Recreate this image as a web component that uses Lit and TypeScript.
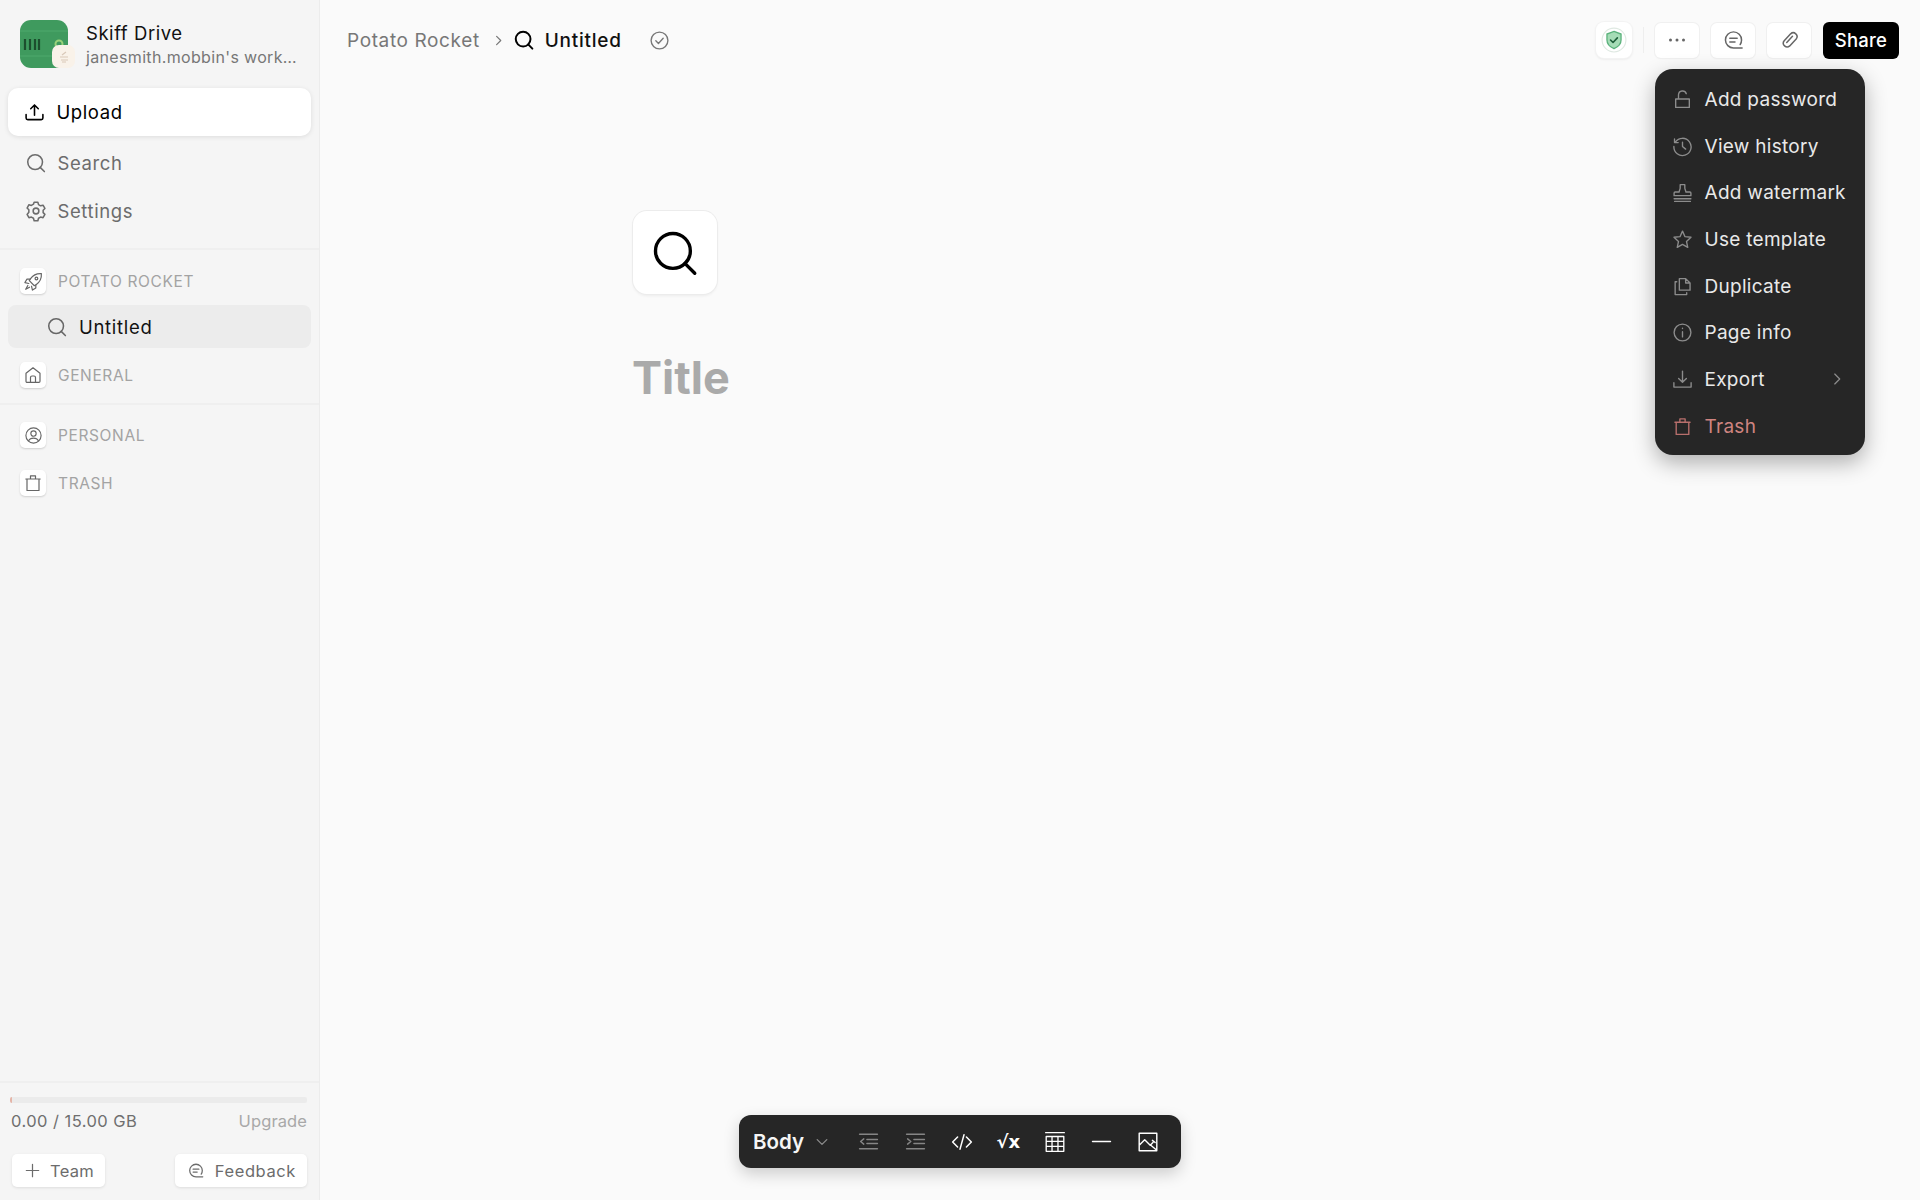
import { LitElement, html, css, svg } from "lit";
import { customElement } from "lit/decorators.js";

const ic = (body: unknown, size = 20, sw = 1.5) => html`<svg class="ic" width=${size} height=${size} viewBox="0 0 20 20" fill="none" stroke="currentColor" stroke-width=${sw} stroke-linecap="round" stroke-linejoin="round">${body}</svg>`;

const I = {
  search: svg`<circle cx="9.2" cy="9.2" r="6.7"/><path d="M13.8 14 L17.6 17.8"/>`,
  upload: svg`<path d="M10 12.5V3M6.4 6.4 10 2.8l3.6 3.6M2 12v3.2c0 .9.7 1.6 1.6 1.6h12.8c.9 0 1.6-.7 1.6-1.6V12"/>`,
  gear: svg`<path d="M8.3 2.2h3.4l.6 2.2 1.9 1.1 2.2-.6 1.7 3-1.6 1.6v2.2l1.6 1.6-1.7 3-2.2-.6-1.9 1.1-.6 2.2H8.3l-.6-2.2-1.9-1.1-2.2.6-1.7-3L3.500 11.300V9.100L1.900 7.500l1.700-3 2.200.6 1.900-1.100z" transform="translate(0 -.2)"/><circle cx="10" cy="10" r="2.600"/>`,
  rocket: svg`<path d="M17.500 2.500c-4.500-.3-8 1.500-10.300 4.800L6 9.200l4.800 4.800 1.900-1.200c3.300-2.300 5.100-5.800 4.800-10.300z" /><circle cx="12.800" cy="7.200" r="1.300"/><path d="M6.600 7.800H3.800L1.800 11l3.700.9M12.200 13.400v2.800L9 18.200l-.9-3.700M4.600 13.800l-2 3.600 3.600-2"/>`,
  home: svg`<path d="M3 8.300 10 2.800l7 5.500v7.900c0 .6-.5 1.100-1.100 1.100H4.100c-.6 0-1.100-.5-1.100-1.100z"/><path d="M7.500 17v-4.500c0-.9.7-1.500 1.500-1.500h2c.8 0 1.500.6 1.500 1.500V17"/>`,
  person: svg`<circle cx="10" cy="10" r="8"/><circle cx="10" cy="8" r="2.800"/><path d="M4.800 15.600c1-2 3-2.900 5.200-2.900s4.200.9 5.200 2.900"/>`,
  trash: svg`<path d="M4 6h12v11.500H4zM2.800 6h14.400M7.500 6V2.800h5V6"/>`,
  plus: svg`<path d="M10 3.500v13M3.500 10h13"/>`,
  comment: svg`<path d="M17.500 16.500H10a7 7 0 1 1 7-7c0 1.500-.4 2.800-1.200 4"/><path d="M6.800 8h6.400M6.800 11.200h4.500"/>`,
  check: svg`<circle cx="10" cy="10" r="8"/><path d="m6.500 10.300 2.500 2.500 4.500-5"/>`,
  link: svg`<path d="M8.200 7.200 11 4.200a3.300 3.300 0 0 1 4.800 4.500l-5.600 6a3.300 3.300 0 0 1-4.800-4.500l4.600-5" /><path d="M7.600 11.800 12.600 6.400"/>`,
  lock: svg`<path d="M3.500 9.500h13v8h-13zM6.200 9.500V5.500a3.800 3.800 0 0 1 7.400-1"/>`,
  history: svg`<path d="M3.200 5.800A8.200 8.200 0 1 1 1.800 10M2.400 2.800v3.500h3.500M10 5.800V10l3 2.500"/>`,
  stamp: svg`<path d="M2 16h16M2.500 18.500h15M7.800 2.500h4.400v3.200c0 1.500 1 2.300 1 3.800h3.800c.6 0 1 .4 1 1V13H2v-2.500c0-.6.4-1 1-1h3.800c0-1.500 1-2.300 1-3.800z"/>`,
  star: svg`<path d="m10 2 2.400 5.300 5.700.6-4.300 3.900 1.200 5.700L10 14.600l-5 2.900 1.200-5.700-4.300-3.900 5.700-.6z"/>`,
  dup: svg`<path d="M7 2.500h6l4.200 4.200V13.500H7zM13 2.500v4.200h4.200M4.500 5.500H3v12.200h11v-1.700" />`,
  info: svg`<circle cx="10" cy="10" r="8"/><path d="M10 9.200v5M10 6v.2"/>`,
  download: svg`<path d="M10 2v10.500M6.300 9 10 12.700 13.700 9M1.800 13v4.200h16.400V13"/>`,
  chev: svg`<path d="m7.500 4.500 5.500 5.500-5.500 5.500"/>`,
  down: svg`<path d="m4 7 6 6 6-6"/>`,
  outdent: svg`<path d="M1.500 3h17M1.500 17h17M8.500 8h10M8.500 12h10M5.500 7.500 2.500 10l3 2.500"/>`,
  indent: svg`<path d="M1.500 3h17M1.500 17h17M8.500 8h10M8.500 12h10M2.500 7.500l3 2.500-3 2.500"/>`,
  code: svg`<path d="M6 5.500 1.500 10 6 14.500M14 5.500l4.500 4.500-4.500 4.500M11.800 3.500 8.200 16.500"/>`,
  table: svg`<path d="M1.500 1.500h17M2 5h16v13.500H2zM2 9.500h16M2 14h16M7.300 5v13.500M12.700 5v13.500"/>`,
  minus: svg`<path d="M1.500 10h17"/>`,
  image: svg`<path d="M2 2h16v16H2zM2 13l5-5 5 5 2.500-2.500M12 12.500l6 5M14 8.500l2.500 2"/>`,
};

const menu: [unknown, string, string?][] = [
  [I.lock, "Add password"], [I.history, "View history"], [I.stamp, "Add watermark"], [I.star, "Use template"],
  [I.dup, "Duplicate"], [I.info, "Page info"], [I.download, "Export", "sub"], [I.trash, "Trash", "danger"],
];

@customElement("app-root")
export class AppRoot extends LitElement {
  static styles = css`
    :host { display: flex; width: 1920px; height: 1200px; overflow: hidden; background: #fafafa; font-family: Inter, "Liberation Sans", sans-serif; color: #000; }
    * { box-sizing: border-box; }
    .ic { display: block; flex: none; }
    aside { width: 320px; height: 1200px; flex: none; background: #f5f5f5; border-right: 1px solid #ececec; display: flex; flex-direction: column; }
    .brand { display: flex; align-items: center; gap: 18px; padding: 20px 0 20px 20px; height: 88px; }
    .logo { position: relative; width: 48px; height: 48px; flex: none; }
    .logo svg { display: block; }
    .badge { position: absolute; left: 32px; top: 25px; width: 23px; height: 23px; border-radius: 7px; background: #f9f2e9; display: flex; align-items: center; justify-content: center; }
    .brand-text { margin-bottom: 1px; }
    .brand-t { font-size: 18.500px; line-height: 24px; letter-spacing: .55px; color: #111; }
    .brand-s { font-size: 16px; line-height: 20px; margin-top: 2px; color: #777; letter-spacing: .34px; white-space: nowrap; }
    .top { padding: 0 8px; border-bottom: 2px solid #efefef; height: 162px; }
    .row { height: 48px; display: flex; align-items: center; gap: 10.500px; padding-left: 17px; font-size: 18.500px; letter-spacing: .6px; color: #6c6c6c; }
    .upload { background: #fff; border-radius: 10px; box-shadow: 0 1px 5px rgba(0,0,0,.1); color: #000; padding-left: 16px; margin-bottom: 3px; gap: 11.500px; }
    .group { display: flex; align-items: center; gap: 12px; height: 48px; padding-left: 20px; font-size: 15.500px; color: #a3a3a3; letter-spacing: .62px; }
    .chip { width: 26px; height: 26px; border-radius: 5px; background: #fff; box-shadow: 0 1px 2px rgba(0,0,0,.16); color: #666; display: flex; align-items: center; justify-content: center; }
    .s1 { padding-top: 7px; height: 155px; border-bottom: 2px solid #efefef; display: flex; flex-direction: column; }
    .sel { height: 43px; margin: 0 8px; border-radius: 8px; background: #ececec; display: flex; align-items: center; gap: 11px; padding-left: 38px; font-size: 18.500px; letter-spacing: .7px; color: #111; }
    .sel .ic { color: #666; }
    .s1 .gen { margin-top: 3px; }
    .s2 { padding-top: 6px; flex: 1; border-bottom: 2px solid #efefef; }
    .foot { height: 117px; padding: 14px 12px 0 10px; }
    .bar { height: 6px; border-radius: 2px; background: #ebebeb; position: relative; overflow: hidden; }
    .bar i { position: absolute; left: 0; top: 0; width: 2px; height: 6px; background: #e5b5a8; }
    .usage { display: flex; justify-content: space-between; font-size: 16.500px; line-height: 20px; margin-top: 8px; color: #6f6f6f; padding-left: 1px; letter-spacing: .45px; }
    .usage span + span { color: #a8a8a8; letter-spacing: .1px; }
    .btns { display: flex; justify-content: space-between; margin-top: 23px; padding-left: 2px; }
    .btn { height: 33px; border-radius: 5px; background: #fff; box-shadow: 0 1px 3px rgba(0,0,0,.1); display: flex; align-items: center; gap: 8px; padding: 0 11px; font-size: 16.500px; letter-spacing: .3px; color: #6c6c6c; }
    .btn.fb { gap: 10px; padding-left: 12px; letter-spacing: .6px; }

    main { flex: 1; position: relative; display: flex; flex-direction: column; }
    header { height: 80px; display: flex; align-items: center; padding: 0 21px 0 27px; flex: none; }
    .crumb { font-size: 19px; color: #777; letter-spacing: .62px; }
    .crumb-sep { margin: 0 7px 0 11px; color: #777; }
    .cur { font-size: 19px; font-weight: 500; margin-left: 10px; color: #111; letter-spacing: .75px; }
    .saved { margin-left: 27px; color: #777; }
    .spacer { flex: 1; }
    .tb { width: 44px; height: 35px; border-radius: 6px; background: #fff; box-shadow: 0 0 0 1px #f0f0f0, 0 1px 2px rgba(0,0,0,.04); display: flex; align-items: center; justify-content: center; color: #666; margin-left: 12px; }
    .shield { width: 36px; height: 36px; border-radius: 8px; margin-left: 0; box-shadow: 0 0 0 1px #f3f3f3, 0 1px 3px rgba(0,0,0,.1); }
    .vr { width: 1px; height: 26px; background: #eee; margin: 0 -1px 0 11px; }
    .share { margin-left: 12px; width: 76px; height: 37px; background: #000; color: #fff; border-radius: 6px; font-size: 18.500px; font-weight: 500; letter-spacing: .2px; display: flex; align-items: center; justify-content: center; }
    .doc { padding: 131px 0 0 313px; }
    .pic { width: 84px; height: 83px; border-radius: 14px; background: #fff; box-shadow: 0 0 0 1px #ececec, 0 2px 3px rgba(0,0,0,.06); display: flex; align-items: center; justify-content: center; }
    h1 { margin: 54px 0 0 -1px; font-size: 45px; line-height: 60px; font-weight: 700; color: #aaa; }

    .menu { position: absolute; left: 1335px; top: 69px; width: 210px; height: 386px; border-radius: 18px; background: #262626; box-shadow: 0 8px 22px rgba(0,0,0,.3); padding: 7px 0; }
    .mi { height: 46.700px; display: flex; align-items: center; padding: 0 16px 0 16.500px; gap: 12px; color: #e9e9e9; font-size: 19px; white-space: nowrap; letter-spacing: .28px; }
    .mi .ic { color: #8c8c8c; }
    .mi.danger { color: #cf8480; }
    .mi.danger .ic { color: #b86f6c; }
    .mi .arrow { margin-left: auto; margin-right: 3px; }

    .toolbar { position: absolute; left: 419px; top: 1115px; width: 442px; height: 53px; border-radius: 12px; background: #262626; box-shadow: 0 6px 16px rgba(0,0,0,.18); display: flex; align-items: center; padding-left: 14px; color: #fff; }
    .body { font-size: 20.500px; font-weight: 600; width: 63px; color: #f5f5f5; }
    .toolbar .dn { color: #8c8c8c; width: 18px; margin-right: 13px; margin-left: -2px;}
    .t { width: 46.700px; display: flex; justify-content: center; flex: none; }
    .t.dim { color: #858585; }
    .root { font-family: "DejaVu Sans", sans-serif; font-size: 18px; font-weight: 600; line-height: 20px; height: 20px; }
  `;

  render() {
    return html`
      <aside>
        <div class="brand">
          <div class="logo">
            <svg width="48" height="48" viewBox="0 0 48 48">
              <rect width="48" height="48" rx="11" fill="#3f9a5e"/>
              <path d="M0 11H48M0 36H48" stroke="#4fa96d" stroke-width="1"/>
              <path d="M5 19v11M10 19v11M15 19v11M19 19v11" stroke="#1c4f2e" stroke-width="2.200"/>
              <circle cx="39" cy="24" r="3.500" fill="none" stroke="#9ad27a" stroke-width="2"/>
            </svg>
            <div class="badge">
              <svg width="14" height="14" viewBox="0 0 14 14"><path d="M9 2 5 5M3 7h8M4 10h7M5 12h4" stroke="#d9c8b8" stroke-width="1.200"/></svg>
            </div>
          </div>
          <div class="brand-text">
            <div class="brand-t">Skiff Drive</div>
            <div class="brand-s">janesmith.mobbin's work…</div>
          </div>
        </div>
        <div class="top">
          <div class="row upload">${ic(I.upload, 21)}Upload</div>
          <div class="row">${ic(I.search, 22, 1.400)}Search</div>
          <div class="row">${ic(I.gear, 22, 1.400)}Settings</div>
        </div>
        <div class="s1">
          <div class="group"><span class="chip">${ic(I.rocket, 21, 1.150)}</span>POTATO ROCKET</div>
          <div class="sel">${ic(I.search, 22, 1.400)}Untitled</div>
          <div class="group gen"><span class="chip">${ic(I.home, 20, 1.200)}</span>GENERAL</div>
        </div>
        <div class="s2">
          <div class="group"><span class="chip">${ic(I.person, 19, 1.200)}</span>PERSONAL</div>
          <div class="group"><span class="chip">${ic(I.trash, 20, 1.200)}</span>TRASH</div>
        </div>
        <div class="foot">
          <div class="bar"><i></i></div>
          <div class="usage"><span>0.00 / 15.00 GB</span><span>Upgrade</span></div>
          <div class="btns">
            <div class="btn">${ic(I.plus, 19, 1.300)}Team</div>
            <div class="btn fb">${ic(I.comment, 18, 1.400)}Feedback</div>
          </div>
        </div>
      </aside>
      <main>
        <header>
          <span class="crumb">Potato Rocket</span>
          <span class="crumb-sep">${ic(I.chev, 15, 1.600)}</span>
          ${ic(I.search, 22, 1.800)}
          <span class="cur">Untitled</span>
          <span class="saved">${ic(I.check, 21, 1.300)}</span>
          <span class="spacer"></span>
          <div class="tb shield">
            <svg width="26" height="26" viewBox="0 0 24 24" fill="none">
              <circle cx="12" cy="12" r="11" stroke="#dfe9e2" stroke-width="1"/>
              <path d="M12 4 18.500 6.500V12c0 4-3 6.500-6.500 8-3.500-1.500-6.500-4-6.500-8V6.500z" fill="#a5dcb6" stroke="#5bb27c" stroke-width="1.200"/>
              <path d="m8.800 12 2.300 2.300 4-4.300" stroke="#1f5f3b" stroke-width="1.500" stroke-linecap="round" stroke-linejoin="round"/>
            </svg>
          </div>
          <div class="vr"></div>
          <div class="tb"><svg width="20" height="20" viewBox="0 0 20 20" fill="currentColor"><circle cx="3.500" cy="10" r="1.500"/><circle cx="10" cy="10" r="1.500"/><circle cx="16.500" cy="10" r="1.500"/></svg></div>
          <div class="tb">${ic(I.comment, 23, 1.300)}</div>
          <div class="tb">${ic(I.link, 23, 1.300)}</div>
          <div class="share">Share</div>
        </header>
        <div class="doc">
          <div class="pic">${ic(I.search, 52, 1.300)}</div>
          <h1>Title</h1>
        </div>
        <div class="menu">
          ${menu.map(([p, label, kind]) => html`
            <div class="mi ${kind === "danger" ? "danger" : ""}">${ic(p, 21, 1.300)}<span>${label}</span>${kind === "sub" ? html`<span class="arrow">${ic(I.chev, 18, 1.400)}</span>` : ""}</div>`)}
        </div>
        <div class="toolbar">
          <span class="body">Body</span>
          <span class="dn">${ic(I.down, 16, 1.600)}</span>
          <span class="t dim">${ic(I.outdent, 21, 1.400)}</span>
          <span class="t dim">${ic(I.indent, 21, 1.400)}</span>
          <span class="t">${ic(I.code, 22, 1.400)}</span>
          <span class="t root">√x</span>
          <span class="t">${ic(I.table, 22, 1.200)}</span>
          <span class="t">${ic(I.minus, 21, 1.500)}</span>
          <span class="t">${ic(I.image, 22, 1.300)}</span>
        </div>
      </main>
    `;
  }
}
